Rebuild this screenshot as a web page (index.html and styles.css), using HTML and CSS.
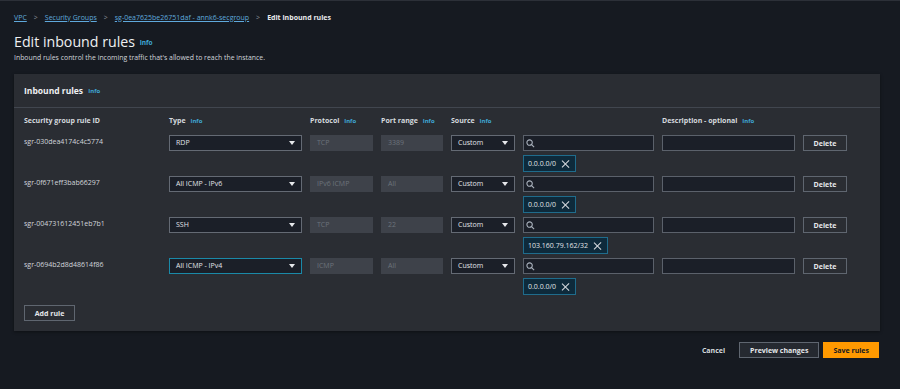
FILE: index.html
```html
<!DOCTYPE html>
<html lang="en">

<head>
    <meta charset="UTF-8">
    <meta name="viewport" content="width=device-width, initial-scale=1.0">
    <title>Edit inbound rules</title>
    <link rel="stylesheet" href="styles.css">
</head>

<body>
    <nav class="crumbs">
        <a href="#">VPC</a>
        <span class="sep">&gt;</span>
        <a href="#">Security Groups</a>
        <span class="sep">&gt;</span>
        <a href="#">sg-0ea7625be26751daf - annk6-secgroup</a>
        <span class="sep">&gt;</span>
        <span class="current">Edit inbound rules</span>
    </nav>

    <h1 class="title">Edit inbound rules <span class="info">Info</span></h1>
    <p class="lead">Inbound rules control the incoming traffic that's allowed to reach the instance.</p>

    <div class="panel">
        <div class="panel-head">Inbound rules <span class="info">Info</span></div>

        <div class="panel-body">
            <div class="rules">
                <div class="label">Security group rule ID</div>
                <div class="label">Type <span class="info">Info</span></div>
                <div class="label">Protocol <span class="info">Info</span></div>
                <div class="label">Port range <span class="info">Info</span></div>
                <div class="label">Source <span class="info">Info</span></div>
                <div class="label"></div>
                <div class="label">Description - optional <span class="info">Info</span></div>
                <div class="label"></div>

                <!-- row 1 -->
                <div class="rule-id">sgr-030dea4174c4c5774</div>
                <div class="select">RDP<span class="caret"></span></div>
                <div class="field disabled">TCP</div>
                <div class="field disabled">3389</div>
                <div class="select">Custom<span class="caret"></span></div>
                <div class="cidr">
                    <div class="field search"><svg width="9" height="9" viewBox="0 0 10 10"><circle cx="4" cy="4" r="3" fill="none" stroke="#aab2bd" stroke-width="1.2"/><path d="M6.2 6.2 L9 9" stroke="#aab2bd" stroke-width="1.3"/></svg></div>
                    <div class="chip">0.0.0.0/0<span class="x"></span></div>
                </div>
                <div class="field"></div>
                <button class="btn">Delete</button>

                <!-- row 2 -->
                <div class="rule-id">sgr-0f671eff3bab66297</div>
                <div class="select">All ICMP - IPv6<span class="caret"></span></div>
                <div class="field disabled">IPv6 ICMP</div>
                <div class="field disabled">All</div>
                <div class="select">Custom<span class="caret"></span></div>
                <div class="cidr">
                    <div class="field search"><svg width="9" height="9" viewBox="0 0 10 10"><circle cx="4" cy="4" r="3" fill="none" stroke="#aab2bd" stroke-width="1.2"/><path d="M6.2 6.2 L9 9" stroke="#aab2bd" stroke-width="1.3"/></svg></div>
                    <div class="chip">0.0.0.0/0<span class="x"></span></div>
                </div>
                <div class="field"></div>
                <button class="btn">Delete</button>

                <!-- row 3 -->
                <div class="rule-id">sgr-004731612451eb7b1</div>
                <div class="select">SSH<span class="caret"></span></div>
                <div class="field disabled">TCP</div>
                <div class="field disabled">22</div>
                <div class="select">Custom<span class="caret"></span></div>
                <div class="cidr">
                    <div class="field search"><svg width="9" height="9" viewBox="0 0 10 10"><circle cx="4" cy="4" r="3" fill="none" stroke="#aab2bd" stroke-width="1.2"/><path d="M6.2 6.2 L9 9" stroke="#aab2bd" stroke-width="1.3"/></svg></div>
                    <div class="chip">103.160.79.162/32<span class="x"></span></div>
                </div>
                <div class="field"></div>
                <button class="btn">Delete</button>

                <!-- row 4 -->
                <div class="rule-id">sgr-0694b2d8d48614f86</div>
                <div class="select focused">All ICMP - IPv4<span class="caret"></span></div>
                <div class="field disabled">ICMP</div>
                <div class="field disabled">All</div>
                <div class="select">Custom<span class="caret"></span></div>
                <div class="cidr">
                    <div class="field search"><svg width="9" height="9" viewBox="0 0 10 10"><circle cx="4" cy="4" r="3" fill="none" stroke="#aab2bd" stroke-width="1.2"/><path d="M6.2 6.2 L9 9" stroke="#aab2bd" stroke-width="1.3"/></svg></div>
                    <div class="chip">0.0.0.0/0<span class="x"></span></div>
                </div>
                <div class="field"></div>
                <button class="btn">Delete</button>
            </div>

            <button class="btn add">Add rule</button>
        </div>
    </div>

    <div class="actions">
        <button class="link-btn">Cancel</button>
        <button class="btn">Preview changes</button>
        <button class="btn primary">Save rules</button>
    </div>
</body>

</html>
```

FILE: styles.css
```css
body {
    background-color: #161a21;
    font-family: 'Open Sans', sans-serif;
    font-size: 7px;
    color: #d1d5db;
    margin: 0;
    padding: 0 20px 0 14px;
    border-top: 1px solid #2c3038;
}

.crumbs {
    display: flex;
    align-items: center;
    gap: 6px;
    height: 16px;
    margin-top: 8px;
    font-size: 7px;
}

.crumbs a {
    color: #5fa9dc;
    text-decoration: underline;
}

.crumbs .sep {
    color: #8d939b;
    margin: 0 1px;
}

.crumbs .current {
    color: #e9ebed;
    font-weight: bold;
}

.title {
    font-size: 14.2px;
    font-weight: normal;
    color: #eef0f2;
    margin: 7px 0 0;
    line-height: 20px;
}

.info {
    color: #3fa7d6;
    font-size: 6px;
    font-weight: bold;
    margin-left: 3px;
    vertical-align: middle;
}

.title .info {
    font-size: 6.5px;
    margin-left: 1px;
}

.lead {
    margin: 0;
    font-size: 6.9px;
    line-height: 9px;
    color: #d1d5db;
}

.panel {
    background-color: #2a2d33;
    margin-top: 12px;
    box-shadow: 0 1px 3px rgba(0, 0, 0, 0.4);
}

.panel-head {
    height: 33px;
    line-height: 33px;
    padding-left: 10px;
    font-size: 8.5px;
    font-weight: bold;
    color: #eef0f2;
    border-bottom: 1px solid #41464f;
}

.panel-body {
    padding: 8px 10px 10px;
}

.rules {
    display: grid;
    grid-template-columns: 137px 133px 63px 62px 64px 131px 133px 44px;
    column-gap: 8px;
    row-gap: 4px;
}

.label {
    font-weight: bold;
    color: #d5d9de;
    height: 10px;
    line-height: 10px;
    margin-bottom: 5px;
}

.rule-id {
    padding-top: 2px;
    color: #d1d5db;
}

.field,
.select {
    box-sizing: border-box;
    height: 16px;
    line-height: 14px;
    border: 1px solid #5b616b;
    background-color: #1b1f28;
    padding: 0 6px;
    color: #e1e4e8;
}

.select {
    position: relative;
    border-color: #646a74;
}

.select.focused {
    border-color: #1a89a8;
}

.caret {
    position: absolute;
    right: 6px;
    top: 5px;
    border-left: 3px solid transparent;
    border-right: 3px solid transparent;
    border-top: 4px solid #e6e8eb;
}

.field.disabled {
    background-color: #3e424a;
    border-color: #3e424a;
    color: #6c727b;
}

.search {
    display: flex;
    align-items: center;
    align-self: stretch;
    padding-left: 2px;
}

.cidr {
    display: flex;
    flex-direction: column;
    align-items: flex-start;
    gap: 4px;
}

.chip {
    display: flex;
    align-items: center;
    gap: 6px;
    box-sizing: border-box;
    height: 17px;
    padding: 0 5px 0 4px;
    background-color: #0e2a3b;
    border: 1px solid #1f6c8c;
    color: #e1e4e8;
}

.x {
    position: relative;
    width: 8px;
    height: 8px;
}

.x::before,
.x::after {
    content: "";
    position: absolute;
    left: 3px;
    top: -1px;
    width: 1.3px;
    height: 10px;
    background-color: #d7dbe0;
    transform: rotate(45deg);
}

.x::after {
    transform: rotate(-45deg);
}

.btn {
    box-sizing: border-box;
    height: 16px;
    padding: 0 9px;
    background-color: transparent;
    border: 1px solid #5f6670;
    color: #e6e8eb;
    font-family: 'Open Sans', sans-serif;
    font-size: 7px;
    font-weight: bold;
    cursor: pointer;
}

.add {
    margin-top: 10px;
    width: 51px;
    padding: 0;
}

.actions {
    display: flex;
    justify-content: flex-end;
    align-items: center;
    gap: 4px;
    margin-top: 11px;
    margin-right: 1px;
}

.actions .btn {
    background-color: #252930;
    padding: 0 10px;
}

.actions .btn.primary {
    background-color: #ff9900;
    border-color: #ff9900;
    color: #161a21;
    padding: 0 9px;
}

.link-btn {
    background: none;
    border: none;
    padding: 0;
    color: #d5d9de;
    font-family: 'Open Sans', sans-serif;
    font-size: 7px;
    font-weight: bold;
    margin-right: 10px;
}
```
